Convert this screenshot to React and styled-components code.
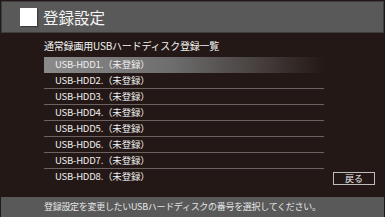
import styled, { createGlobalStyle } from "styled-components";

const GlobalStyle = createGlobalStyle`
  html, body {
    margin: 0;
    padding: 0;
    background: #231815;
  }
  body {
    font-family: "Noto Sans CJK JP", "Noto Sans", sans-serif;
  }
`;

const disks = [1, 2, 3, 4, 5, 6, 7, 8];

const App = () => {
  return (
    <StScreen>
      <GlobalStyle />
      <StHeader>
        <StIcon />
        <StTitle>登録設定</StTitle>
      </StHeader>
      <StSubTitle>通常録画用USBハードディスク登録一覧</StSubTitle>
      <StBody>
        <StList>
          {disks.map((n) => (
            <StRow key={n} $active={n === 1}>
              USB-HDD{n}.（未登録）
            </StRow>
          ))}
        </StList>
        <StBackButton>戻る</StBackButton>
      </StBody>
      <StFooter>登録設定を変更したいUSBハードディスクの番号を選択してください。</StFooter>
    </StScreen>
  );
};

export default App;

const StScreen = styled.div`
  width: 385px;
  height: 217px;
  display: flex;
  flex-direction: column;
  background: #231815;
  color: #fff;
  overflow: hidden;
`;

const StHeader = styled.div`
  margin: 1px 1px 0 1px;
  height: 32px;
  box-sizing: border-box;
  background: #595959;
  border: 1px solid #3d3d3d;
  display: flex;
  align-items: center;
  padding-left: 18px;
  gap: 6px;
`;

const StIcon = styled.div`
  width: 17px;
  height: 18px;
  background: #fff;
  box-shadow: 1px 1px 1px rgba(0, 0, 0, 0.35);
`;

const StTitle = styled.div`
  font-size: 15.5px;
  line-height: 18px;
  color: #f4f4f4;
`;

const StSubTitle = styled.div`
  margin-top: 4px;
  padding-left: 44px;
  height: 17px;
  font-size: 10px;
  line-height: 17px;
  letter-spacing: -0.2px;
  color: #f2f2f2;
`;

const StBody = styled.div`
  flex: 1;
  display: flex;
  align-items: flex-end;
  padding-left: 44px;
  padding-top: 3px;
  padding-bottom: 12px;
`;

const StList = styled.div`
  width: 280px;
  align-self: flex-start;
`;

const StRow = styled.div`
  height: 16px;
  box-sizing: border-box;
  padding-left: 11px;
  font-size: 9.5px;
  line-height: 15px;
  letter-spacing: -0.2px;
  color: #f0f0f0;
  border-bottom: 1px solid ${(p) => (p.$active ? "transparent" : "#6a6263")};
  background: ${(p) =>
    p.$active
      ? "linear-gradient(to right, #8a8a8a 0%, #6e6e6e 45%, #453d3c 78%, #231815 100%)"
      : "transparent"};

  &:last-child {
    border-bottom: none;
  }
`;

const StBackButton = styled.div`
  margin-left: 9px;
  width: 42px;
  height: 13px;
  box-sizing: border-box;
  border: 1px solid #bdbdbd;
  font-size: 9px;
  line-height: 11px;
  text-align: center;
  color: #f2f2f2;
`;

const StFooter = styled.div`
  margin: 0 1px 0 1px;
  height: 20px;
  background: #595959;
  padding-left: 43px;
  font-size: 9px;
  line-height: 20px;
  letter-spacing: -0.3px;
  color: #e6e6e6;
  white-space: nowrap;
`;
